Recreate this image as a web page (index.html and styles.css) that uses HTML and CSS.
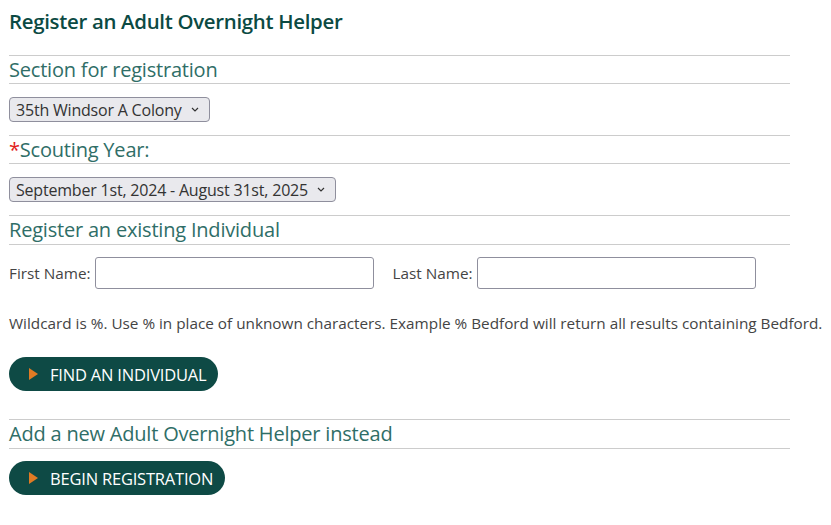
FILE: index.html
```html
<!DOCTYPE html>
<html lang="en">
<head>
  <meta charset="UTF-8">
  <title>Register an Adult Overnight Helper</title>
  <link rel="stylesheet" href="styles.css">
</head>
<body>
  <main class="page">
    <h1 class="page-title">Register an Adult Overnight Helper</h1>

    <!-- Section -->
    <h2 class="section-head">Section for registration</h2>
    <div class="field">
      <div class="select">35th Windsor A Colony
        <svg class="chev" width="8" height="5" viewBox="0 0 8 5"><path d="M1 1l3 3 3-3" fill="none" stroke="#333" stroke-width="1.2"/></svg>
      </div>
    </div>

    <!-- Year -->
    <h2 class="section-head"><span class="req">*</span>Scouting Year:</h2>
    <div class="field">
      <div class="select">September 1st, 2024 - August 31st, 2025
        <svg class="chev" width="8" height="5" viewBox="0 0 8 5"><path d="M1 1l3 3 3-3" fill="none" stroke="#333" stroke-width="1.2"/></svg>
      </div>
    </div>

    <!-- Existing individual -->
    <h2 class="section-head tall">Register an existing Individual</h2>
    <div class="name-row">
      <label class="name-field">First Name: <input type="text"></label>
      <label class="name-field">Last Name: <input type="text"></label>
    </div>
    <p class="hint">Wildcard is %. Use % in place of unknown characters. Example % Bedford will return all results containing Bedford.</p>
    <button class="pill-btn" type="button"><span class="tri"></span>FIND AN INDIVIDUAL</button>

    <!-- New -->
    <h2 class="section-head tall spaced">Add a new Adult Overnight Helper instead</h2>
    <button class="pill-btn" type="button"><span class="tri"></span>BEGIN REGISTRATION</button>
  </main>
</body>
</html>
```

FILE: styles.css
```css
/* Global */
body {
  margin: 0;
  background: #fff;
  font-family: 'Open Sans', 'Noto Sans', sans-serif;
  color: #444;
}
.page {
  padding: 0 41px 0 9px;
}
.page-title {
  margin: 0;
  padding-top: 7px;
  height: 48px;
  font-size: 20.4px;
  font-weight: 600;
  color: #0b4a43;
  letter-spacing: -0.3px;
}

/* Section headings between rules */
.section-head {
  margin: 0;
  border-top: 1px solid #ccc;
  border-bottom: 1px solid #ccc;
  font-size: 20px;
  font-weight: 400;
  line-height: 27px;
  color: #2f6e67;
  letter-spacing: -0.2px;
}
.section-head.tall { line-height: 28px; }
.section-head.spaced { margin-top: 28px; }
.req { color: #e21b1b; }

.field { padding: 13px 0; }
.select {
  display: inline-flex;
  align-items: center;
  box-sizing: border-box;
  height: 25px;
  padding: 0 10px 0 6px;
  border: 1px solid #8f8f9d;
  border-radius: 4px;
  background: #e9e9ed;
  font-size: 16px;
  color: #333;
  letter-spacing: -0.2px;
}
.chev { margin-left: 9px; }

/* Name search */
.name-row {
  display: flex;
  gap: 19px;
  padding-top: 12px;
}
.name-field {
  display: flex;
  align-items: center;
  gap: 4px;
  font-size: 15.3px;
  color: #444;
}
.name-field input {
  box-sizing: border-box;
  width: 279px;
  height: 32px;
  margin: 0;
  padding: 0;
  border: 1px solid #8f8f9d;
  border-radius: 3px;
}
.hint {
  margin: 23px 0 23px;
  font-size: 15.3px;
  line-height: 22px;
  white-space: nowrap;
}

/* Buttons */
.pill-btn {
  display: flex;
  align-items: center;
  height: 34px;
  padding: 0 12px 0 20px;
  border: none;
  border-radius: 17px;
  background: #0e4a45;
  color: #fff;
  font-family: inherit;
  font-size: 16.5px;
  letter-spacing: -0.2px;
  cursor: pointer;
}
.tri {
  width: 0;
  height: 0;
  border-top: 6px solid transparent;
  border-bottom: 6px solid transparent;
  border-left: 9px solid #e07b24;
  margin-right: 12px;
}
.section-head.spaced + .pill-btn { margin-top: 12px; }
```
